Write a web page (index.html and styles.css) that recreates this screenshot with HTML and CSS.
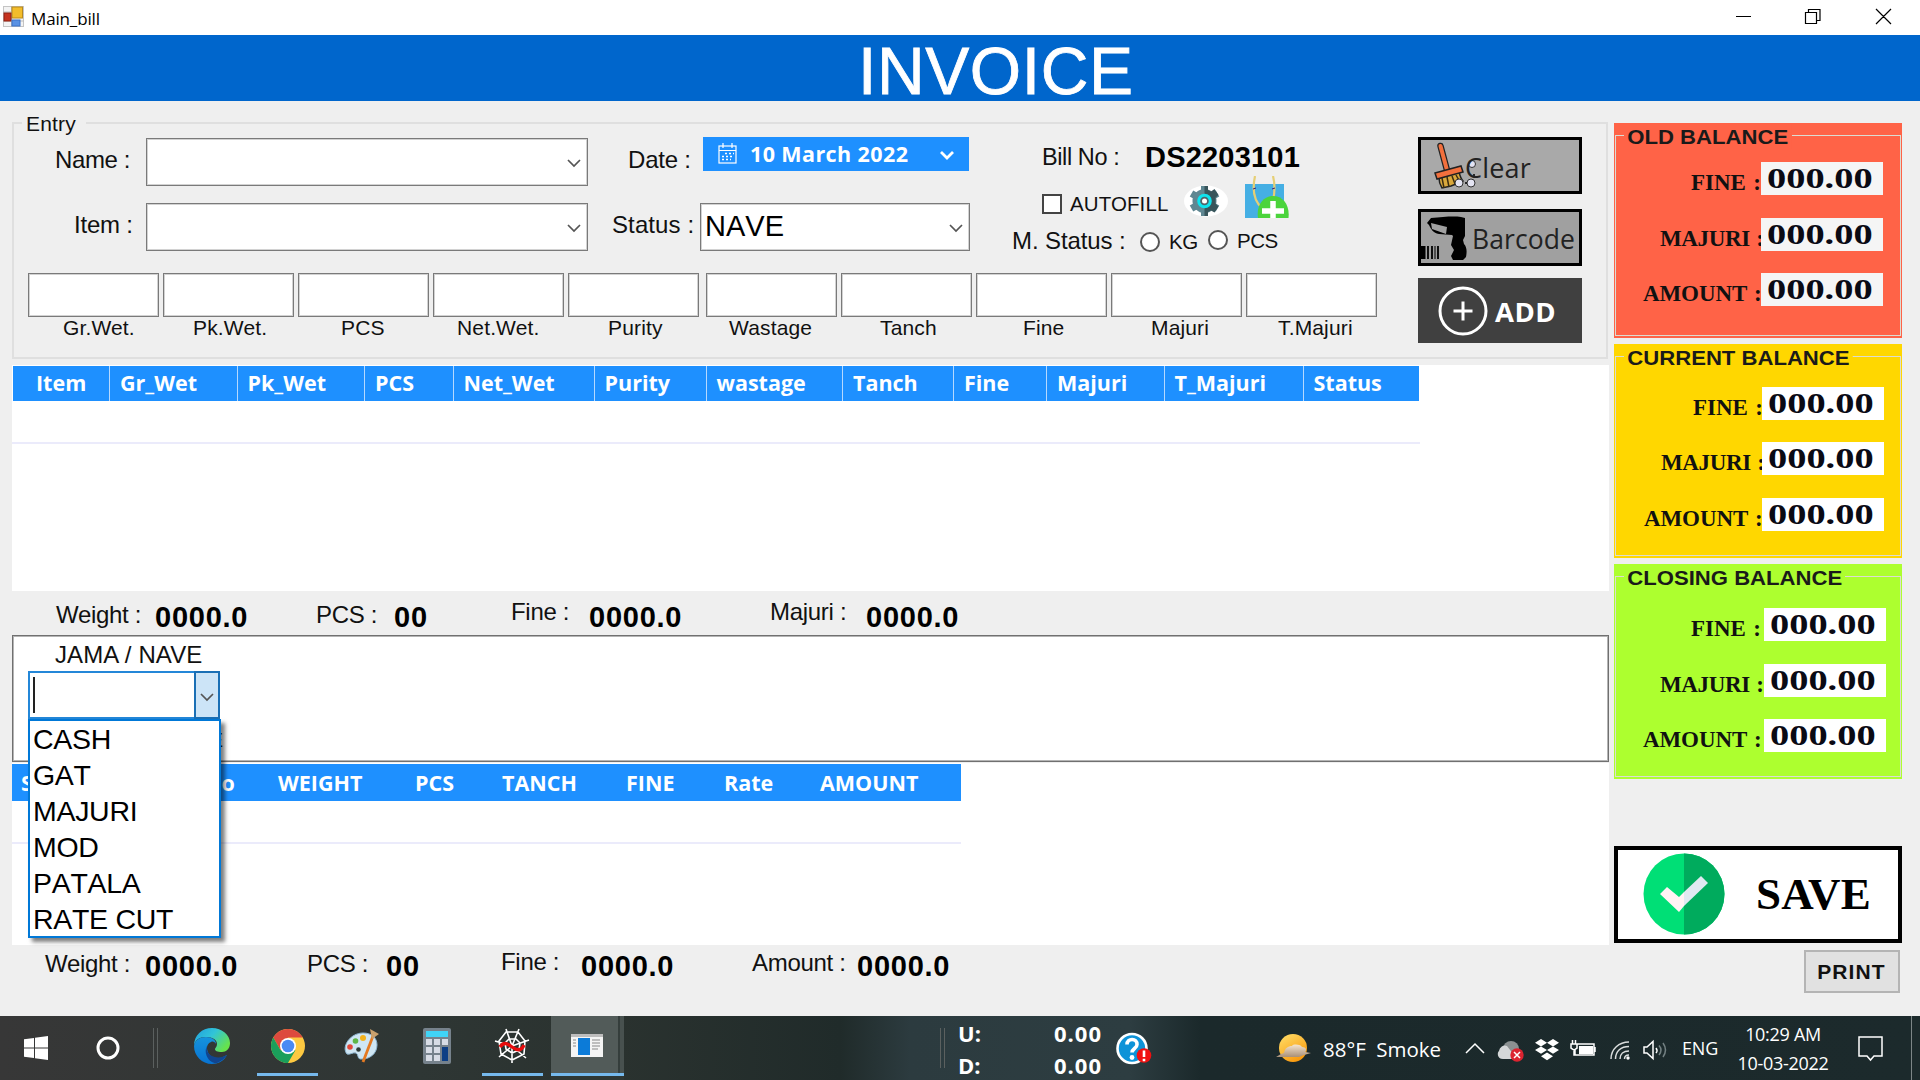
FILE: index.html
```html
<!DOCTYPE html>
<html lang="en">
<head>
<meta charset="utf-8">
<title>Main_bill</title>
<link rel="stylesheet" href="styles.css">
</head>
<body>
<div class="titlebar">
  <svg class="app-icon" width="22" height="22" viewBox="0 0 22 22"><rect x=".5" y=".5" width="20" height="20" fill="#f3f3f3" stroke="#c4c4c4"/><path d="M8.500 0v21M0 6h8M0 15h21" stroke="#bbb"/><rect x="9" y="1" width="10.500" height="11" fill="#f3bd2b" stroke="#b98a1d"/><rect x="1" y="7" width="7" height="8" fill="#c5321f" stroke="#8e2013"/><rect x="9" y="14" width="8" height="6" fill="#5a92e4" stroke="#3c73c8"/></svg>
  <span class="app-name">Main_bill</span>
  <svg class="win-controls" width="158" height="20" viewBox="0 0 158 20" fill="none" stroke="#000" stroke-width="1.200"><path d="M0 10.500h15M69.500 6.500h11v11h-11zM72.500 6.500v-3h11.500v11h-3M140 3l15 15M155 3l-15 15"/></svg>
</div>
<div class="banner">INVOICE</div>

<div class="main">
  <div class="left">
    <div class="entry">
      <span class="entry-legend">Entry</span>
      <div class="entry-left">
        <div class="entry-top">
          <div class="form">
            <label class="lbl lbl-name">Name :</label>
            <div class="combo"><svg class="chev" width="14" height="9" viewBox="0 0 14 9"><path d="M1 1l6 6 6-6"/></svg></div>
            <label class="lbl lbl-date">Date :</label>
            <div class="datepicker">
              <svg width="19" height="21" viewBox="0 0 19 21" fill="none" stroke="#fff" stroke-width="1.200"><rect x="1" y="3" width="17" height="17"/><path d="M1 7.500h17M5 0v5M14 0v5"/><path stroke-dasharray="2 2" stroke-width="1.600" d="M7 10.500h9M4 13.500h12M4 16.500h9"/></svg>
              <span>10 March 2022</span>
              <svg width="14" height="11" viewBox="0 0 14 11" fill="none" stroke="#fff" stroke-width="2.800"><path d="M1 2l6 6 6-6"/></svg>
            </div>
            <label class="lbl lbl-item">Item :</label>
            <div class="combo"><svg class="chev" width="14" height="9" viewBox="0 0 14 9"><path d="M1 1l6 6 6-6"/></svg></div>
            <label class="lbl lbl-status">Status :</label>
            <div class="combo"><span>NAVE</span><svg class="chev" width="14" height="9" viewBox="0 0 14 9"><path d="M1 1l6 6 6-6"/></svg></div>
          </div>
          <div class="bill">
            <div class="bill-row bill-no"><span class="lbl">Bill No :</span><b>DS2203101</b></div>
            <div class="bill-row bill-auto">
              <i class="check"></i><span class="small">AUTOFILL</span>
              <svg class="gear" width="44" height="32" viewBox="0 0 44 32"><ellipse cx="22" cy="16" rx="22" ry="15.500" fill="#fff"/><g fill="#5f8792"><path d="M17 1h7v30h-7z"/><path d="M17 1h7v30h-7z" transform="rotate(60 20.500 16)"/><path d="M17 1h7v30h-7z" transform="rotate(120 20.500 16)"/><circle cx="20.500" cy="16" r="12"/></g><path d="M20.500 1h3.500v4l3 1.500 3.500-2.500 4 6-3 2.500v6l3 3-4 6-3.500-2-3 1.500v4h-3.500z" fill="#38555b"/><circle cx="20.500" cy="16" r="5.800" fill="#50636a" stroke="#0fe3ee" stroke-width="3"/><circle cx="20.500" cy="16" r="2.500" fill="#fff"/></svg>
              <svg class="necklace" width="44" height="42" viewBox="0 0 44 42"><path d="M0 8h39v34H0z" fill="#45afe4"/><path d="M10 0c-3 14-1 25 7 32M28 0c2 8 2 16 0 24" fill="none" stroke="#e6cf75" stroke-width="2.200"/><path d="M8 13l3-1M27 13l3-1" stroke="#427" stroke-width="1"/><path d="M13 42c-2-12 5-22 15-22s17 9 15.500 22z" fill="#4bd43c"/><path d="M28 25v17M17 35h22" stroke="#fff" stroke-width="5.500"/></svg>
            </div>
            <div class="bill-row bill-status"><span class="lbl">M. Status :</span><i class="radio"></i><span class="small kg">KG</span><i class="radio second"></i><span class="small pcs">PCS</span></div>
          </div>
        </div>
        <div class="weights">
          <div class="cell c1"><i></i><span>Gr.Wet.</span></div>
          <div class="cell c2"><i></i><span>Pk.Wet.</span></div>
          <div class="cell c3"><i></i><span>PCS</span></div>
          <div class="cell c4"><i></i><span>Net.Wet.</span></div>
          <div class="cell c5"><i></i><span>Purity</span></div>
          <div class="cell c6"><i></i><span>Wastage</span></div>
          <div class="cell c7"><i></i><span>Tanch</span></div>
          <div class="cell c8"><i></i><span>Fine</span></div>
          <div class="cell c9"><i></i><span>Majuri</span></div>
          <div class="cell c10"><i></i><span>T.Majuri</span></div>
        </div>
      </div>
      <div class="actions">
        <div class="btn clear">
          <svg width="46" height="48" viewBox="0 0 46 48"><path d="M10.500 4l7 26" stroke="#222" stroke-width="6.500" stroke-linecap="round"/><path d="M10.500 4l7 26" stroke="#f2703d" stroke-width="4" stroke-linecap="round"/><path d="M9 36l20-6c1 4 2 7 4 9l-7 3-5 2-9 2c-2-3-3-6-3-10z" fill="#d9a83c" stroke="#222" stroke-width="1.500"/><path d="M12 36l2 10M17 35l2 10M22 34l3 8M26 33l4 7" stroke="#3a2c10" stroke-width="1.500"/><path d="M5 31l26-7 2 6-26 7z" fill="#f2703d" stroke="#222" stroke-width="1.500"/><g fill="#e4e4f2" stroke="#333" stroke-width="1"><circle cx="29" cy="41" r="4"/><circle cx="41" cy="41" r="4"/><circle cx="42" cy="22" r="3.500"/></g><circle cx="36" cy="41" r="1"/><circle cx="44" cy="33" r="1"/></svg>
          <span>Clear</span>
        </div>
        <div class="btn barcode">
          <svg width="48" height="46" viewBox="0 0 48 46"><path d="M6 7l4-5c12-1 22-2 30-1l4 1v18l-2 4 1 4c3 3 3 8 2 13l-3 3H32l-2-4 3-6-3-5 2-9-1-1-13-1c-6-1-8-5-10-9zM10 7l1 6 14 5 1-7z" fill="#000" fill-rule="evenodd"/><path d="M2 30v13" stroke="#000" stroke-width="5"/><path d="M7 30v13M11 30v13M17 30v13" stroke="#000" stroke-width="1.800"/><path d="M14 30v13" stroke="#000"/></svg>
          <span>Barcode</span>
        </div>
        <div class="btn add">
          <svg width="50" height="50" viewBox="0 0 50 50" fill="none" stroke="#fff" stroke-width="3"><circle cx="25" cy="25" r="23"/><path d="M25 15.500v19M15.500 25h19"/></svg>
          <span>ADD</span>
        </div>
      </div>
    </div>

    <div class="grid grid-items">
      <div class="thead">
        <span class="first">Item</span><span>Gr_Wet</span><span>Pk_Wet</span><span>PCS</span><span>Net_Wet</span><span>Purity</span><span>wastage</span><span>Tanch</span><span>Fine</span><span>Majuri</span><span>T_Majuri</span><span>Status</span>
      </div>
      <div class="trow"></div>
    </div>

    <div class="totals totals-items">
      <span>Weight :</span><b>0000.0</b><span>PCS :</span><b>00</b><span class="up">Fine :</span><b>0000.0</b><span class="up">Majuri :</span><b>0000.0</b>
    </div>

    <div class="payment">
      <div class="jama">JAMA / NAVE</div>
      <div class="picker">
        <div class="picker-box"><i class="caret"></i><div class="picker-btn"><svg class="chev" width="14" height="9" viewBox="0 0 14 9"><path d="M1 1l6 6 6-6"/></svg></div></div>
        <div class="menu">
          <div>CASH</div><div>GAT</div><div>MAJURI</div><div>MOD</div><div>PATALA</div><div>RATE CUT</div>
        </div>
      </div>
      <div class="hint">E</div>
    </div>

    <div class="grid grid-pay">
      <div class="thead"><span>S</span><span>No</span><span>WEIGHT</span><span>PCS</span><span>TANCH</span><span>FINE</span><span>Rate</span><span>AMOUNT</span></div>
      <div class="trow"></div>
    </div>

    <div class="totals totals-pay">
      <span>Weight :</span><b>0000.0</b><span>PCS :</span><b>00</b><span class="up">Fine :</span><b>0000.0</b><span class="up2">Amount :</span><b>0000.0</b>
    </div>
  </div>

  <div class="right">
    <div class="balance old">
      <div class="frame"><span class="legend">OLD BALANCE</span>
        <div class="brow"><span class="k fine">FINE :</span><span class="v"><b>000.00</b></span></div>
        <div class="brow"><span class="k maj">MAJURI :</span><span class="v"><b>000.00</b></span></div>
        <div class="brow"><span class="k amt">AMOUNT :</span><span class="v"><b>000.00</b></span></div>
      </div>
    </div>
    <div class="balance current">
      <div class="frame"><span class="legend">CURRENT BALANCE</span>
        <div class="brow"><span class="k fine">FINE :</span><span class="v"><b>000.00</b></span></div>
        <div class="brow"><span class="k maj">MAJURI :</span><span class="v"><b>000.00</b></span></div>
        <div class="brow"><span class="k amt">AMOUNT :</span><span class="v"><b>000.00</b></span></div>
      </div>
    </div>
    <div class="balance closing">
      <div class="frame"><span class="legend">CLOSING BALANCE</span>
        <div class="brow"><span class="k fine">FINE :</span><span class="v"><b>000.00</b></span></div>
        <div class="brow"><span class="k maj">MAJURI :</span><span class="v"><b>000.00</b></span></div>
        <div class="brow"><span class="k amt">AMOUNT :</span><span class="v"><b>000.00</b></span></div>
      </div>
    </div>
    <div class="save">
      <svg width="82" height="82" viewBox="0 0 82 82"><circle cx="41" cy="41" r="40.500" fill="#00df76"/><path d="M41 .5a40.500 40.500 0 0 1 0 81z" fill="#00ab5d"/><path d="M17 41l7-7 12 10 5-5v14l-5 6z" fill="#fff3f4"/><path d="M41 39l17-16 7 7-24 23z" fill="#dfe9f1"/></svg>
      <span>SAVE</span>
    </div>
    <div class="print">PRINT</div>
  </div>
</div>

<div class="taskbar">
  <svg class="t-win" width="24" height="24" viewBox="0 0 24 24" fill="#fff"><path d="M0 3.300L10 2v9.500H0zM11 1.800L24 0v11.500H11zM0 12.500h10V22L0 20.700zM11 12.500h13V24l-13-1.800z"/></svg>
  <svg class="t-circle" width="24" height="24" viewBox="0 0 24 24"><circle cx="12" cy="12" r="10" fill="none" stroke="#fff" stroke-width="3"/></svg>
  <i class="divider t-div1"></i>
  <svg class="t-edge" width="36" height="36" viewBox="0 0 36 36">
    <defs>
      <linearGradient id="eg" x1="0" y1="0" x2="1" y2=".6"><stop offset="0" stop-color="#1f9de0"/><stop offset=".5" stop-color="#31c4d8"/><stop offset="1" stop-color="#66e24c"/></linearGradient>
      <linearGradient id="eb" x1="0" y1="0" x2="0" y2="1"><stop offset="0" stop-color="#1593dc"/><stop offset="1" stop-color="#0873d2"/></linearGradient>
    </defs>
    <path d="M0 18C0 7 8 0 18 0s18 7 18 15c0 6-4 9-8 9-5 0-7-1-7-3 0-1 2-2 2-5 0-4-4-7-11-7S1 12 0 18z" fill="url(#eg)"/>
    <path d="M0 18C1 12 6 9 12 9c6 0 10 3 10 7-1-2-3-3-5-2-6 2-5 11 1 15 4 3 10 1 15-2-3 6-9 9-15 9C8 36 0 28 0 18z" fill="url(#eb)"/>
    <path d="M13 18c-4 7 2 18 10 17 5-2 8-5 10-8-5 3-11 3-15 1-4-2-6-6-5-10z" fill="#11458f"/>
  </svg>
  <div class="task running t-chrome"><svg width="34" height="34" viewBox="0 0 34 34"><circle cx="17" cy="17" r="17" fill="#fdc941"/><path d="M2.300 8.500A17 17 0 0 1 31.700 8.500H17L9.600 21.300z" fill="#dd4a3e"/><path d="M2.300 8.500A17 17 0 0 0 17 34l7.400-12.700H9.600z" fill="#1a9f5b"/><circle cx="17" cy="17" r="8" fill="#fff"/><circle cx="17" cy="17" r="6.300" fill="#4a8af4"/></svg></div>
  <svg class="t-paint" width="36" height="36" viewBox="0 0 36 36"><path d="M19 5c9 0 14 5 14 12 0 9-8 15-17 14-3-1-1-4-4-6-3-1-6 2-9 1-6-7 3-21 16-21z" fill="#cfe6f4" stroke="#8fb7d2"/><circle cx="14.500" cy="21.500" r="2.300" fill="#2e3935"/><circle cx="6" cy="19" r="2.800" fill="#e2483a"/><circle cx="11.500" cy="13" r="2.800" fill="#5fb546"/><circle cx="19" cy="10" r="3" fill="#f2b21d"/><path d="M29 8L19 34" stroke="#e47a22" stroke-width="2.800"/><path d="M26 1l9 5-7 5z" fill="#c9a06d"/></svg>
  <svg class="t-calc" width="28" height="36" viewBox="0 0 28 36"><rect width="28" height="36" rx="2" fill="#76828c"/><rect x="3" y="3" width="22" height="6" fill="#40d4f7"/><g fill="#d7dce5"><path d="M3 11h6v6H3zM11 11h6v6h-6zM19 11h6v6h-6zM3 19h6v6H3zM11 19h6v6h-6zM3 27h6v6H3zM11 27h6v6h-6z"/></g><path d="M19 19h6v14h-6z" fill="#0d3f85"/></svg>
  <div class="task running t-spider"><svg width="36" height="36" viewBox="0 0 36 36" fill="none" stroke="#fff" stroke-width="1.600"><path d="M18 18L12 1M18 18L25 1M18 18L35 12M18 18l14 12M18 18v17M18 18L5 29M18 18L1 13M12 4h12l7 9-1 13-12 6-11-6-2-13zM15 11h7l4 4-1 7-7 3-6-4-1-6z"/><path d="M6 19c4-6 8-3 12 0s9 5 12-2" stroke="#e80c0c" stroke-width="3.400"/></svg></div>
  <div class="task running active t-app"><svg width="32" height="23" viewBox="0 0 32 23"><rect width="32" height="23" fill="#f4f4f4"/><path d="M0 0h32v3H0z" fill="#bdbdbd"/><path d="M7 4h12v17H7z" fill="#0c7bd8"/><path d="M2 6h3M2 9h3M2 12h3M21 6h8M21 9h8M21 12h8M21 15h6" stroke="#888"/></svg></div>
  <i class="divider t-div2"></i>
  <div class="net"><span>U:</span><span class="n">0.00</span><span>D:</span><span class="n">0.00</span></div>
  <div class="help"><svg width="36" height="34" viewBox="0 0 36 34"><circle cx="16" cy="16.500" r="14.500" fill="#0e93d8" stroke="#fff" stroke-width="2.600"/><path d="M11 12.500c0-7 10.500-6.500 10 0 0 4-5 4-5 8" fill="none" stroke="#fff" stroke-width="3.600"/><circle cx="16" cy="25.500" r="2.400" fill="#fff"/><circle cx="28" cy="23.500" r="7.300" fill="#f01010"/><path d="M28 18.500v6.500M28 26.800v2.400" stroke="#fff" stroke-width="2.600"/></svg></div>
  <svg class="t-sun" width="36" height="30" viewBox="0 0 36 30"><defs><linearGradient id="sun" x1="0" y1="0" x2=".6" y2="1"><stop offset="0" stop-color="#ffe06b"/><stop offset="1" stop-color="#f99a0e"/></linearGradient><linearGradient id="cl" x1="0" y1="0" x2="0" y2="1"><stop offset="0" stop-color="#f6e4cd"/><stop offset="1" stop-color="#a99078"/></linearGradient></defs><circle cx="18" cy="14" r="14" fill="url(#sun)"/><path d="M9 19c1-5 4-7 8-7 1-2 8-2 10 1 4 0 5 3 3 5l6 1-7 2-5 2H1l5-3z" fill="url(#cl)"/></svg>
  <span class="weather"><span>88°F</span><span>Smoke</span></span>
  <svg class="tray" width="204" height="28" viewBox="0 0 204 28" fill="none" stroke="#fff" stroke-width="1.500">
    <path d="M1 15l9-9 9 9"/>
    <g stroke="none"><circle cx="46" cy="11" r="8" fill="#8b9192"/><path d="M34 13a6 6 0 0 1 8-5l10 13H38c-6 0-6-7-4-8z" fill="#d4d7d8"/><circle cx="52" cy="17" r="6.700" fill="#dc2430"/></g><path d="M49 14l6 6M55 14l-6 6"/>
    <path stroke="none" fill="#fff" d="M76 1l6 3.700-6 3.700-6-3.700zM88 1l6 3.700-6 3.700-6-3.700zM76 8.400l6 3.700-6 3.700-6-3.700zM88 8.400l6 3.700-6 3.700-6-3.700zM82 14.500l6 3.700-6 4-6-4z"/>
    <path d="M112 6h17v11h-19v-5M130 9v5M106 6h6v4l-3 2-3-2zM107.500 2v4M110.500 2v4M109 12v5h3"/><path stroke="none" fill="#fff" d="M114 8h14v8h-14z"/>
    <path d="M146 21C146 11 154 4 164 4M150.500 21c0-8 5.500-12.500 13.500-12.500M155 21c0-5 3.500-8 9-8M159.500 21c0-2 1.500-4 4.500-4" stroke="#dadddd"/><circle cx="163" cy="20" r="1.700" fill="#fff" stroke="none"/>
    <path d="M179 9h3l6-5.500v17L182 15h-3zM191 10q2 2.500 0 5"/><path d="M194 7.500q4 4.500 0 9.500M198 5q5 7 0 14" stroke="#738082"/>
  </svg>
  <span class="lang">ENG</span>
  <div class="clock"><span>10:29 AM</span><span>10-03-2022</span></div>
  <svg class="t-note" width="26" height="26" viewBox="0 0 26 26" fill="none" stroke="#fff" stroke-width="1.500"><path d="M1 1h23v19h-8l-3.500 4L9 20H1z"/></svg>
  <i class="peek"></i>
</div>
</body>
</html>
```
FILE: styles.css
```css
* { box-sizing: border-box; }
html, body { margin: 0; }
body {
  width: 1920px; height: 1080px; overflow: hidden;
  display: flex; flex-direction: column;
  background: #efefef; color: #111;
  font-family: "Liberation Sans", Arial, sans-serif;
  white-space: nowrap;
}
i { display: block; font-style: normal; flex: none; }
svg { display: block; flex: none; }

/* Window chrome */
.titlebar { height: 35px; flex: none; display: flex; background: #fff; }
.app-icon { margin: 6px 0 0 3px; }
.app-name { margin-left: 6px; line-height: 37px; font-family: "Open Sans", sans-serif; font-size: 17px; letter-spacing: -.15px; color: #000; }
.win-controls { margin: 6px 26px 0 auto; }
.banner { height: 66px; flex: none; background: #06c; color: #fff; font-size: 66px; line-height: 72px; padding-left: 858px; letter-spacing: .6px; -webkit-text-stroke: .8px #fff; }
.main { height: 915px; flex: none; display: flex; padding-left: 12px; }
.left { width: 1597px; display: flex; flex-direction: column; padding-top: 21px; }
.right { width: 288px; margin-left: 5px; padding-top: 22px; display: flex; flex-direction: column; }

/* Entry group */
.entry { position: relative; width: 1596px; height: 237px; flex: none; border: 2px solid #dfdfdf; display: flex; }
.entry-legend { position: absolute; left: 8px; top: -12px; padding: 0 10px 0 4px; background: #efefef; font-size: 21px; line-height: 24px; letter-spacing: .2px; }
.entry-left { width: 1403px; flex: none; padding-top: 13px; }
.entry-top { display: flex; height: 136px; }
.form { width: 956px; display: grid; grid-template-columns: 132px 442px 112px 270px; grid-template-rows: 48px 48px; row-gap: 17px; padding-top: 1px; }
.lbl { font-size: 24px; line-height: 43px; letter-spacing: -.2px; }
.lbl-name { padding-left: 41px; letter-spacing: -.4px; }
.lbl-date { padding-left: 40px; }
.lbl-item { padding-left: 60px; }
.lbl-status { padding-left: 24px; letter-spacing: .1px; }
.combo { background: #fff; border: 1px solid #7a7a7a; box-shadow: inset 0 0 0 1px #d2d2d2; display: flex; align-items: flex-start; padding-left: 4px; font-size: 29px; line-height: 44px; color: #000; font-kerning: none; }
.chev { fill: none; stroke: #555; stroke-width: 1.700; margin: 20px 6px 0 auto; }
.datepicker { height: 34px; width: 266px; margin: -1px 0 0 3px; background: #1e90ff; color: #fff; display: flex; padding: 6px 15px 0 15px; font: 700 21.500px/22px "Open Sans", sans-serif; letter-spacing: .4px; }
.datepicker span { margin-left: 13px; width: 160px; }
.datepicker svg:last-child { margin: 7px 0 0 auto; }

.bill { margin-left: 43px; }
.bill-row { display: flex; }
.bill-no { height: 39px; padding-left: 29px; }
.bill-no .lbl { width: 103px; font-size: 23.500px; line-height: 40px; letter-spacing: -.4px; }
.bill-no b { font-size: 29px; line-height: 40px; letter-spacing: .2px; color: #000; }
.bill-auto { height: 50px; padding-left: 29px; }
.check { width: 20px; height: 20px; margin-top: 18px; border: 2px solid #444; background: #fff; }
.small { font-size: 20.500px; line-height: 28px; }
.bill-auto .small { margin: 14px 0 0 8px; width: 114px; letter-spacing: .1px; }
.gear { margin-top: 9px; }
.necklace { margin-left: 17px; }
.bill-status .lbl { line-height: 29px; width: 128px; margin-left: -1px; letter-spacing: -.1px; }
.radio { width: 20px; height: 20px; margin-top: 6px; border: 2px solid #555; border-radius: 50%; background: #fff; }
.radio.second { margin-top: 4px; }
.kg { margin: 2px 0 0 9px; width: 39px; letter-spacing: -.3px; }
.pcs { margin: 1px 0 0 9px; letter-spacing: -.5px; }

.weights { display: grid; grid-template-columns: repeat(4, 135px) 138px repeat(5, 135px); padding-left: 14px; }
.cell i { width: 131px; height: 44px; background: #fff; border: 1px solid #7a7a7a; box-shadow: inset 0 0 0 1px #d2d2d2; }
.cell span { display: block; font-size: 21px; line-height: 21px; letter-spacing: .15px; }
.c1 span { padding-left: 35px; } .c2 span { padding-left: 30px; } .c3 span { padding-left: 43px; }
.c4 span { padding-left: 24px; } .c5 span { padding-left: 40px; } .c6 span { padding-left: 23px; }
.c7 span { padding-left: 39px; } .c8 span { padding-left: 47px; } .c9 span { padding-left: 40px; } .c10 span { padding-left: 32px; }

.actions { width: 164px; padding-top: 13px; margin-left: 1px; }
.btn { display: flex; width: 164px; height: 57px; border: 3px solid #000; margin-bottom: 15px; font-family: "Open Sans", sans-serif; font-size: 27px; color: #222; background: #a9a9a9; }
.clear svg { margin: 2px 0 0 9px; }
.clear span { margin-left: -11px; line-height: 55px; letter-spacing: .2px; }
.barcode { background: #a0a0a0; margin-bottom: 12px; font-size: 26.500px; }
.barcode svg { margin: 4px 0 0 0; }
.barcode span { margin-left: 3px; line-height: 55px; letter-spacing: .1px; }
.add { height: 65px; border: 0; background: #404040; color: #fff; font-weight: 700; padding: 8px 0 0 20px; font-size: 27.500px; }
.add span { margin-left: 7px; line-height: 51px; letter-spacing: .5px; }

/* Data grids */
.grid { width: 1596.500px; flex: none; background: #fff; }
.thead { display: grid; background: #1e90ff; color: #fff; font: 700 21.500px/34px "Open Sans", sans-serif; }
.trow { height: 42px; border-bottom: 2px solid #ebebfb; }
.grid-items { height: 226px; margin-top: 6px; padding-top: 1px; }
.grid-items .thead { margin-left: 1px; width: 1406px; height: 35px; grid-template-columns: 97px 127.500px 127.500px 88.500px 141px 112px 136.500px 111px 93px 117.500px 139px 1fr; line-height: 34px; }
.grid-items .thead span { padding-left: 10px; border-right: 1px solid #b5d9ff; }
.grid-items .thead .first { padding-left: 23px; }
.grid-items .thead span:last-child { border: 0; }
.grid-items .trow { width: 1408px; height: 43px; }
.grid-pay { height: 182px; margin-top: 1px; }
.grid-pay .thead { margin-top: 1px; width: 949px; height: 37px; grid-template-columns: 182px 75px 137px 87px 124px 98px 96px 1fr; padding-left: 9px; line-height: 37px; }
.grid-pay .thead span:nth-child(2) { padding-left: 1px; }
.grid-pay .trow { width: 949px; height: 43px; }

.totals { flex: none; height: 44px; display: grid; align-items: start; font-size: 24px; }
.totals span { letter-spacing: -.3px; }
.totals b { font-size: 29px; letter-spacing: .75px; color: #000; }
.totals-items { padding-left: 44px; grid-template-columns: 99px 161px 78px 117px 78px 181px 96px 1fr; }
.totals-items span { line-height: 47px; }
.totals-items b { line-height: 52px; }
.totals-items .up { line-height: 41px; }
.totals-pay { padding-left: 33px; grid-template-columns: 100px 162px 79px 115px 80px 171px 105px 1fr; }
.totals-pay span { line-height: 38px; }
.totals-pay b { line-height: 43px; }
.totals-pay .up { line-height: 33px; }
.totals-pay .up2 { line-height: 35px; }

/* Payment selector */
.payment { width: 1597px; height: 127px; flex: none; background: #fff; border: 1px solid #707070; box-shadow: inset 0 0 0 1px #b4b4b4; }
.jama { padding-left: 42px; font-size: 24px; line-height: 38px; height: 35px; letter-spacing: .1px; }
.picker { position: relative; width: 192px; margin-left: 15px; }
.picker-box { height: 48px; border: 2px solid #2487d8; background: #fff; display: flex; padding: 3px 0 0 3px; }
.caret { width: 2px; height: 36px; background: #222; margin-top: 1px; }
.picker-btn { width: 26px; height: 48px; margin: -5px -2px 0 auto; background: #cce4f7; border: 2px solid #1a6fb5; }
.picker-btn .chev { margin: 20px 4px 0 auto; }
.menu { position: absolute; z-index: 2; left: 0; top: 48px; width: 193px; height: 219px; background: #fff; border: 2px solid #0078d7; box-shadow: 4px 4px 4px rgba(0,0,0,.5); padding: 0 0 0 3px; font-size: 28.500px; line-height: 36px; color: #000; font-kerning: none; letter-spacing: -.3px; }
.hint { text-align: right; width: 195px; margin: 9px 0 0 15px; font-size: 21px; line-height: 24px; }

/* Balance cards */
.balance { height: 214.500px; flex: none; margin-bottom: 6px; padding: 12px 1px 2px; }
.old { background: #ff6347; } .current { background: #ffd700; } .closing { background: #adff2f; }
.frame { position: relative; height: 200.500px; border: 1.500px solid #dcdcd2; padding-top: 26px; }
.current .frame { padding-top: 30px; } .closing .frame { padding-top: 31px; }
.legend { position: absolute; left: 8px; top: -11px; padding: 0 3px; line-height: 24px; font-size: 20px; font-weight: 700; color: #1a1a1a; transform: scaleX(1.105); transform-origin: 0 0; }
.old .legend { background: #ff6347; } .current .legend { background: #ffd700; } .closing .legend { background: #adff2f; }
.brow { display: flex; height: 33px; margin-bottom: 22.500px; }
.k { width: 145px; flex: none; height: 41px; font: 700 23px/41px "Liberation Serif", serif; word-spacing: 1.500px; }
.fine { padding-left: 75px; } .maj { padding-left: 44px; letter-spacing: -.35px; word-spacing: 1px; } .amt { padding-left: 27px; letter-spacing: -.1px; }
.v { position: relative; width: 121.500px; height: 33px; background: #fff; padding-left: 6px; }
.old .v { background: #f5f5f5; }
.current .k { width: 146px; } .closing .k { width: 148px; }
.current .fine { padding-left: 77px; } .current .maj { padding-left: 45px; } .current .amt { padding-left: 28px; }
.v b { display: inline-block; font: 700 30px/32px "Liberation Serif", serif; transform: scaleX(1.280); transform-origin: 0 0; color: #0a0a14; }
.save { height: 97px; flex: none; margin-top: 61px; border: 4px solid #000; background: #fff; display: flex; padding: 3px 0 0 25px; color: #000; font: 700 45px/83px "Liberation Serif", serif; }
.save span { margin-left: 31px; letter-spacing: .2px; }
.print { flex: none; width: 96px; height: 43px; margin: 7px 0 0 190px; border: 2px solid #b4b4b4; background: #e1e1e1; text-align: center; font-size: 21px; line-height: 40px; font-weight: 700; letter-spacing: 1.100px; padding-right: 1px; }

/* Taskbar */
.taskbar { height: 64px; flex: none; display: flex; color: #fff; background: linear-gradient(90deg, #373737 0, #2e3634 420px, #2a322f 620px, #202b2a 840px, #2c3b3f 910px, #2d3d41 1130px, #1b292b 1200px, #1c2a2c 1920px); font-family: "Open Sans", sans-serif; }
.t-win { margin: 20px 0 0 24px; }
.t-circle { margin: 20px 0 0 48px; }
.divider { width: 5px; height: 40px; border: solid #5b605f; border-width: 0 1px; margin-top: 12px; }
.t-div1 { margin-left: 33px; }
.t-edge { margin: 12px 0 0 36px; }
.task { flex: none; width: 61px; height: 60px; display: flex; justify-content: center; padding-top: 12px; }
.running { border-bottom: 3px solid #76b9ed; }
.t-chrome { margin-left: 27px; padding-top: 13px; }
.t-paint { margin: 12px 0 0 26px; }
.t-calc { margin: 12px 0 0 43px; }
.t-spider { margin-left: 31px; padding-right: 2px; }
.active { width: 73px; height: 64px; margin-left: 8px; padding: 18px 1px 0 0; background: linear-gradient(90deg, #525b59 67px, #353e3c 67px, #353e3c 69px, #48514f 69px); border: 0; }
.active { box-shadow: inset 0 -4px #2e3735, inset 0 -7px #76b9ed; }
.t-div2 { margin-left: 316px; }
.net { margin-left: 13px; width: 144px; display: grid; grid-template-columns: 1fr auto; grid-template-rows: 32px 32px; font-size: 22px; line-height: 34px; font-weight: 700; }
.net .n { letter-spacing: 1px; }
.help { margin: 16px 0 0 14px; }
.t-sun { margin: 18px 0 0 123px; }
.weather { margin-left: 12px; width: 118px; display: flex; justify-content: space-between; font-size: 20.500px; line-height: 66px; }
.tray { margin: 22px 0 0 24px; }
.lang { margin-left: 13px; width: 38px; font-size: 18px; line-height: 64px; letter-spacing: -.2px; }
.clock { width: 120px; margin-left: 3px; display: flex; flex-direction: column; align-items: center; font-size: 18px; line-height: 29px; padding-top: 4px; letter-spacing: -.3px; }
.t-note { margin: 20px 0 0 15px; }
.peek { margin-left: 27px; width: 1px; height: 64px; background: #7d8687; }
```
